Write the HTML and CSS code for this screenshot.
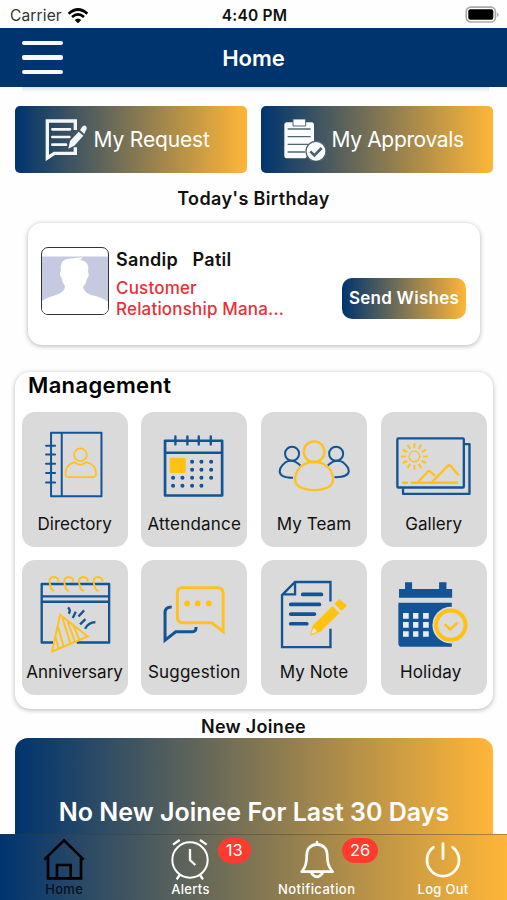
FILE: index.html
```html
<!DOCTYPE html>
<html lang="en">
<head>
<meta charset="utf-8">
<title>Home</title>
<link rel="stylesheet" href="styles.css">
</head>
<body>
<div class="screen">
  <div class="status">
    <div class="carrier"><span>Carrier</span>
      <svg width="20" height="15" viewBox="205 20 60 45" fill="none" stroke="#000" stroke-width="8"><path d="M207 37Q235 12 263 37M217 47Q235 31 253 47"/><path d="M225 56Q235 47 245 56L235 66Z" fill="#000" stroke="none"/></svg>
    </div>
    <div class="time">4:40 PM</div>
    <svg class="battery" width="34" height="18" viewBox="0 0 34 18"><rect x="1.2" y="1.2" width="29.2" height="14.8" rx="4.5" fill="#fff" stroke="#aaa" stroke-width="1.7"/><rect x="3.3" y="3.3" width="25" height="10.4" rx="2" fill="#000"/><path d="M32 6.5q1.6.8 1.6 2.2T32 11z" fill="#aaa"/></svg>
  </div>
  <header class="header">
    <div class="burger"><i></i><i></i><i></i></div>
    <h1>Home</h1>
  </header>
  <main class="content">
    <div class="actions">
      <div class="action">
        <svg width="42" height="42" viewBox="134 356 126 126" fill="none" stroke="#f4f7fa" stroke-width="10"><path d="M225 389V362H141V473L162 459H225V441"/><path d="M156 387H209M156 410H207M156 433H197" stroke-width="8" stroke-linecap="round"/><path d="M204 445L209 422L235 394L249 406L222 436Z" fill="#f4f7fa" stroke="none"/><path d="M239 389L247 378Q253 372 258 379Q261 385 256 391L252 401Z" fill="#f4f7fa" stroke="none"/></svg>
        <span class="t-req">My Request</span>
      </div>
      <div class="action second">
        <svg width="42" height="42" viewBox="92 356 126 126"><path d="M101 366H174Q182 366 182 374V432L157 474H101Q93 474 93 466V374Q93 366 101 366Z" fill="#fafcff"/><path d="M119 356H157V377H119Z" fill="#fafcff" stroke="#56666c" stroke-width="3"/><path d="M103 386H172M103 409H172M103 432H165M103 455H155" stroke="#56666c" stroke-width="4"/><circle cx="188" cy="453" r="30" fill="#fafcff" stroke="#56666c" stroke-width="4"/><path d="M171 453L183 465L205 443" fill="none" stroke="#4b6070" stroke-width="8"/></svg>
        <span class="t-app">My Approvals</span>
      </div>
    </div>
    <h2 class="today"><span>Today's Birthday</span></h2>
    <section class="birthday">
      <div class="avatar"><svg viewBox="0 0 66 66" width="66" height="66"><rect y="8.5" width="66" height="58" fill="#c6cae1"/><path d="M0 66V53Q4 50 14 47Q23 44 23 38Q20 34 19.5 30Q16.5 25 19 23Q17 10 30 10.5Q37 9 41 9.5L38 12Q48 13 46 24Q48 27 45 31Q44 36 41 39Q42 44 49 47Q62 50 66 54V66Z" fill="#fff"/></svg></div>
      <div class="person"><div class="name"><span>Sandip</span> <span>Patil</span></div><div class="role"><span>Customer</span><br><span>Relationship Mana...</span></div></div>
      <div class="wish"><span>Send Wishes</span></div>
    </section>
    <section class="management">
      <h2>Management</h2>
      <div class="grid">
        <div class="tile"><svg viewBox="64 156 318 280"><g class="b"><path d="M151 218H302V408H151ZM183 218V408" stroke-linejoin="round"/><path d="M136 257H163M136 283H163M136 311H163M136 339H163M136 367H163" stroke-linecap="round"/></g><g class="y" stroke-width="5"><circle cx="239" cy="284" r="19"/><path d="M222 306Q193 314 194 342Q194 351 203 351H277Q286 351 286 342Q287 313 256 306Q239 322 222 306Z"/></g></svg><span>Directory</span></div>
        <div class="tile wide"><svg viewBox="424 156 318 280"><g class="b" stroke-width="8"><path d="M496 242H667V406H496ZM496 278H667" stroke-linejoin="round"/><path d="M527 229V253M563 229V253M597 229V253M633 229V253" stroke-linecap="round" stroke-width="7"/></g><rect x="510" y="293" width="48" height="46" rx="4" fill="#ffc20e"/><path d="M577 305h.1M605 305h.1M634 305h.1M577 329h.1M605 329h.1M634 329h.1M520 353h.1M548 353h.1M577 353h.1M605 353h.1M634 353h.1M520 377h.1M548 377h.1M577 377h.1M605 377h.1" stroke="#125495" stroke-width="12" stroke-linecap="round"/></svg><span>Attendance</span></div>
        <div class="tile"><svg viewBox="24 156 318 280"><g class="b"><circle cx="117" cy="281" r="21"/><circle cx="249" cy="281" r="21"/><path d="M142 316Q118 294 97 307Q80 320 80 334Q81 353 120 353M224 316Q248 294 270 307Q287 320 287 334Q285 352 244 351"/></g><g class="y" stroke-width="7"><circle cx="183" cy="275" r="31"/><path d="M156 311Q183 299 210 311Q239 327 240 357Q240 389 183 390Q126 389 126 357Q127 327 156 311Z"/></g></svg><span>My Team</span></div>
        <div class="tile"><svg viewBox="384 156 318 280"><g class="b" stroke-width="7"><rect x="433" y="235" width="199" height="147" rx="3"/><path d="M634 252H649V401H450V385" stroke-linejoin="round"/></g><g class="y"><circle cx="484" cy="289" r="16" stroke-width="4"/><path d="M484 249V263M484 315V329M444 289H458M510 289H524M464 254L471 267M497 311L504 324M449 269L462 276M506 302L519 309M449 309L462 302M506 276L519 269M464 324L471 311M497 267L504 254"/><path d="M447 368H465M473 368H615M495 366L524 335Q528 331 532 335L546 347M537 366L583 318Q588 313 593 318L617 346" stroke-width="7"/></g></svg><span>Gallery</span></div>
        <div class="tile"><svg viewBox="64 30 318 280"><g class="b"><path d="M157 277H123V102H325V277H228M123 139H325M123 155H325" stroke-width="7" stroke-linejoin="round"/><path d="M202 172Q211 181 204 191M225 185L216 204M250 181L233 199M254 207L238 223M284 216Q262 217 253 236" stroke-width="7"/></g><g class="y"><path d="M148 105Q142 81 159 81Q174 82 173 95M149 103Q149 119 161 123M192 105Q186 81 203 81Q218 82 217 95M193 103Q193 119 205 123M236 105Q230 81 247 81Q262 82 261 95M237 103Q237 119 249 123M280 105Q274 81 291 81Q306 82 305 95M281 103Q281 119 293 123"/><path d="M178 194L261 259L154 304ZM172 230L189 290M185 203L209 279M201 215L222 273M218 227L235 266M165 263L173 294"/></g></svg><span>Anniversary</span></div>
        <div class="tile wide"><svg viewBox="424 30 318 280"><path class="b" d="M516 171Q496 171 496 188V270L528 245H578Q589 245 589 231" stroke-width="9"/><path class="y" d="M546 113H653Q670 113 670 130V244L636 218H550Q533 218 533 201V130Q533 113 546 113Z" stroke-width="9"/><path d="M562 160h.1M594 160h.1M627 160h.1" stroke="#ffc20e" stroke-width="17" stroke-linecap="round"/></svg><span>Suggestion</span></div>
        <div class="tile"><svg viewBox="24 30 318 280"><g class="b"><path d="M232 154V96H126L87 135V291H232V236M126 98V133H90" stroke-width="7"/><path d="M149 133H205M113 163H199M113 192H184M113 221H161" stroke-width="11" stroke-linecap="round"/></g><path d="M171 257L179 226L238 168L259 189L202 245Z" fill="#ffc20e"/><path d="M244 161L258 147L282 166L265 183Z" fill="#ffc20e"/><path d="M175 251L180 235Q191 235 190 246Z" fill="#eee9d9"/></svg><span>My Note</span></div>
        <div class="tile holiday"><svg viewBox="384 30 318 280"><path fill="#125495" d="M438 117H456V97H477V117H558V97H580V117H597V143H438ZM436 158H596V290H447Q436 290 436 279Z"/><path fill="#e8edf2" d="M450 189h17v17h-17zM480 189h16v17h-16zM510 189h17v17h-17zM450 216h17v17h-17zM480 216h16v17h-16zM510 216h17v17h-17zM450 243h17v17h-17zM480 243h16v17h-16zM510 243h17v17h-17z"/><circle cx="593" cy="225" r="55" fill="#dadada"/><circle cx="593" cy="225" r="44" fill="none" stroke="#ffc20e" stroke-width="12"/><path class="y" d="M575 222L591 238L614 217" stroke-width="8"/></svg><span>Holiday</span></div>
      </div>
    </section>
    <h2 class="joinee"><span>New Joinee</span></h2>
    <section class="none"><span>No New Joinee For Last 30 Days</span></section>
  </main>
  <nav class="tabs">
    <div class="tab home"><svg viewBox="130 325 126 126"><g fill="none" stroke="#000" stroke-width="8"><path d="M134 390L193 332L252 390M145 383V446H244V383M172 446V406H213V446"/></g></svg><span>Home</span></div>
    <div class="tab"><svg viewBox="509 325 126 126"><g fill="none" stroke="#fff" stroke-width="6"><circle cx="572" cy="391" r="53"/><path d="M572 358V391L588 406M541 436L532 449M602 436L611 449M521 345L541 331M602 331L622 345" stroke-width="7"/></g></svg><span>Alerts</span><b class="badge alerts">13</b></div>
    <div class="tab notification"><svg viewBox="130 325 126 126"><path d="M193 337V344M147 426H240M150 422Q162 409 162 380Q162 346 193 344Q224 346 224 380Q224 409 237 422M177 431Q193 452 209 431" fill="none" stroke="#fff" stroke-width="8" stroke-linecap="round"/></svg><span>Notification</span><b class="badge notif">26</b></div>
    <div class="tab"><svg viewBox="509 325 126 126"><path d="M543 353A48 48 0 1 0 601 353M572 342V387" fill="none" stroke="#fffdf0" stroke-width="8.5" stroke-linecap="round"/></svg><span>Log Out</span></div>
  </nav>
</div>
</body>
</html>
```
FILE: styles.css
```css
* { box-sizing: border-box; }
body { margin: 0; font-family: Inter, "Liberation Sans", sans-serif; color: #111; background: #fefefe; }
h1, h2 { margin: 0; font-weight: 600; }
span { white-space: nowrap; }
svg { display: block; flex: none; }
.screen { width: 507px; height: 900px; overflow: hidden; display: flex; flex-direction: column; }
.status { height: 28px; display: grid; grid-template-columns: 1fr auto 1fr; align-items: center; padding: 2px 8px 0 10px; }
.carrier { display: flex; align-items: center; gap: 6px; font-size: 15.5px; color: #333; letter-spacing: .15px; }
.time { font-size: 15.5px; font-weight: 600; letter-spacing: .2px; }
.battery { justify-self: end; }
.header { height: 59px; background: #00346f; display: grid; grid-template-columns: 64px 1fr 64px; align-items: center; position: relative; flex: none; }
.header::after { content: ""; position: absolute; left: 22px; right: 18px; top: 59px; height: 5px; background: linear-gradient(#e0e0e0, #fefefe); }
.header h1 { text-align: center; color: #fff; font-size: 22px; line-height: 28px; }
.burger { margin-left: 22px; width: 41px; display: grid; gap: 10px; }
.burger i { height: 4.3px; border-radius: 2px; background: #f7f9ff; }
.content { flex: 1; min-height: 0; overflow: hidden; padding: 19px 14px 0; display: flex; flex-direction: column; }
.actions { display: grid; grid-template-columns: 232.5px 232.5px; gap: 13.5px; margin-left: .5px; height: 67.3px; flex: none; }
.action { border-radius: 5px; display: flex; align-items: center; gap: 7px; padding-left: 30px; color: #fff; font-size: 21px; letter-spacing: -.15px; background: linear-gradient(90deg, #00346f, #ffb638); }
.action.second { padding-left: 23px; gap: 6px; letter-spacing: -.35px; }
.today { height: 49.7px; line-height: 51.7px; text-align: center; font-size: 18px; letter-spacing: .35px; flex: none; }
.birthday { margin: 0 14px; width: 452px; height: 122px; flex: none; border-radius: 14px; background: #fff; box-shadow: 0 1px 5px rgba(0,0,0,.3); display: grid; grid-template-columns: 68px 1fr 124px; padding: 24px 14px 0 13px; column-gap: 7px; }
.avatar { width: 68px; height: 68px; border: 1.4px solid #333; border-radius: 7px; overflow: hidden; }
.name { font-size: 18px; line-height: 26px; font-weight: 600; white-space: nowrap; letter-spacing: .3px; display: flex; gap: 14.5px; }
.role { font-size: 17px; line-height: 21px; color: #ed2e38; font-weight: 500; margin-top: 5px; letter-spacing: .18px; }
.wish { margin-top: 31px; height: 41px; border-radius: 10px; background: linear-gradient(90deg, #00346f, #ffb638); color: #fff; font-size: 17px; font-weight: 600; letter-spacing: .25px; display: flex; align-items: center; justify-content: center; }
.management { margin: 27px 0 0 1px; width: 478px; height: 337px; flex: none; border-radius: 15px; background: #fff; box-shadow: 0 1px 5px rgba(0,0,0,.3); padding-left: 6.5px; }
.management h2 { font-size: 22px; line-height: 27px; margin-left: 6.5px; height: 40px; color: #000; letter-spacing: .35px; }
.grid { display: grid; grid-template-columns: repeat(4, 106.2px); grid-auto-rows: 134.8px; gap: 13.5px; }
.tile { border-radius: 13px; background: #dadada; display: flex; flex-direction: column; align-items: center; letter-spacing: .05px; }
.tile svg { width: 106.2px; height: 93.5px; stroke-width: 6; }
.tile span { font-size: 17px; line-height: 24px; margin-top: 6.6px; }
.tile.wide { letter-spacing: .2px; }
.tile.holiday span { margin-right: 6px; letter-spacing: .15px; }
.b { fill: none; stroke: #125495; }
.y { fill: none; stroke: #ffc120; }
.joinee { height: 29px; line-height: 36.5px; text-align: center; font-size: 18px; letter-spacing: .3px; flex: none; }
.none { margin-left: 1px; width: 478px; height: 150px; flex: none; border-radius: 13px; background: linear-gradient(90deg, #00346f, #ffb638); text-align: center; padding-top: 58px; color: #fff; font-size: 25px; line-height: 32px; font-weight: 600; }
.tabs { height: 66px; flex: none; display: grid; grid-template-columns: repeat(4, 126.3px); padding-left: 1px; background: linear-gradient(90deg, #00346f, #ffb638); border-top: 1px solid rgba(60,60,50,.4); }
.tab { position: relative; display: flex; flex-direction: column; align-items: center; color: #fff; font-size: 13px; font-weight: 500; letter-spacing: .3px; padding-top: 3.3px; }
.tab svg { width: 42px; height: 42px; }
.tab span { line-height: 19px; }
.home { color: #07111c; }
.notification { letter-spacing: .45px; }
.badge { position: absolute; top: 3px; height: 24.5px; border-radius: 13px; background: #ff3b30; color: #fff; font-size: 16.5px; line-height: 24.5px; letter-spacing: 0; font-weight: 400; text-align: center; }
.alerts { left: 90.5px; width: 33px; }
.notif { left: 88.5px; width: 36px; }
```
